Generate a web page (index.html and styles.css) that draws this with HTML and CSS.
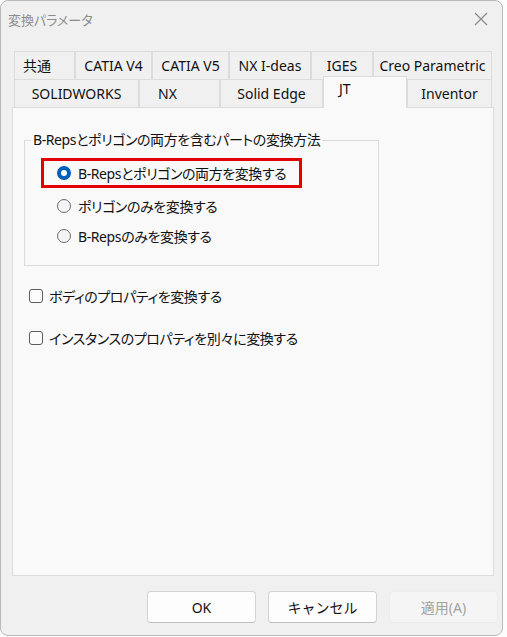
FILE: index.html
```html
<!DOCTYPE html>
<html lang="ja">
<head>
  <meta charset="UTF-8">
  <link rel="stylesheet" href="styles.css">
</head>
<body>

<div class="window">
  <div class="titlebar">
    <span class="title">変換パラメータ</span>
    <svg class="close" width="14" height="14" viewBox="0 0 14 14">
      <path d="M1 1 L13 13 M13 1 L1 13" stroke="#8a8a8a" stroke-width="1.2" fill="none"/>
    </svg>
  </div>

  <!-- タブ -->
  <div class="tabs">
    <div class="tab-row">
      <div class="tab left w-common">共通</div>
      <div class="tab w-v4">CATIA V4</div>
      <div class="tab w-v5">CATIA V5</div>
      <div class="tab w-ideas">NX I-deas</div>
      <div class="tab w-iges">IGES</div>
      <div class="tab w-creo">Creo Parametric</div>
    </div>
    <div class="tab-row">
      <div class="tab w-sw">SOLIDWORKS</div>
      <div class="tab left w-nx">NX</div>
      <div class="tab w-se">Solid Edge</div>
      <div class="tab left active w-jt">JT</div>
      <div class="tab w-inv">Inventor</div>
    </div>
  </div>

  <div class="panel">
    <fieldset class="group">
      <legend>B-Repsとポリゴンの両方を含むパートの変換方法</legend>
      <div class="opt mark"><span class="radio on"></span>B-Repsとポリゴンの両方を変換する</div>
      <div class="opt"><span class="radio"></span>ポリゴンのみを変換する</div>
      <div class="opt"><span class="radio"></span>B-Repsのみを変換する</div>
    </fieldset>

    <div class="check"><span class="box"></span>ボディのプロパティを変換する</div>
    <div class="check"><span class="box"></span>インスタンスのプロパティを別々に変換する</div>
  </div>

  <div class="buttons">
    <button class="btn">OK</button>
    <button class="btn">キャンセル</button>
    <button class="btn disabled">適用(A)</button>
  </div>
</div>

</body>
</html>
```
FILE: styles.css
```css
body {
  margin: 0;
  background: #fdfdfd;
  font-family: "Noto Sans", "Noto Sans CJK JP", sans-serif;
  font-feature-settings: "palt";
  color: #111;
}
.window {
  width: 501px;
  height: 634px;
  border: 1px solid #b9b9b9;
  border-radius: 8px;
  background: #f0f0f0;
  display: flex;
  flex-direction: column;
  overflow: hidden;
}
.titlebar {
  height: 36px;
  display: flex;
  align-items: center;
  justify-content: space-between;
  padding: 0 14px 0 7px;
}
.title {
  font-size: 13px;
  color: #8c8c8c;
}

/* タブ */
.tabs {
  margin: 14px 0 0 13px;
}
.tab-row {
  display: flex;
  align-items: flex-end;
  height: 28px;
}
.tab {
  box-sizing: border-box;
  height: 28px;
  border: 1px solid #dcdcdc;
  border-bottom: none;
  background: #f0f0f0;
  font-size: 14px;
  display: flex;
  align-items: center;
  justify-content: center;
  padding-bottom: 1px;
}
.tab.left { justify-content: flex-start; }
.tab.active {
  height: 32px;
  margin-bottom: -1px;
  background: #f9f9f9;
  padding-bottom: 8px;
  position: relative;
  z-index: 1;
}
.w-common { width: 61px; padding-left: 8px; }
.w-v4 { width: 77px; }
.w-v5 { width: 77px; }
.w-ideas { width: 82px; }
.w-iges { width: 62px; }
.w-creo { width: 119px; }
.w-sw { width: 125px; }
.w-nx { width: 81px; padding-left: 18px; }
.w-se { width: 103px; }
.w-jt { width: 84px; padding-left: 15px; }
.w-inv { width: 85px; }

.panel {
  margin-left: 11px;
  width: 480px;
  height: 467px;
  border: 1px solid #dcdcdc;
  background: #f9f9f9;
  font-size: 14px;
  letter-spacing: -0.4px;
}

.group {
  margin: 22px 0 0 11px;
  width: 355px;
  box-sizing: border-box;
  border: 1px solid #dcdcdc;
  padding: 8px 0 14px 0;
}
.group legend {
  margin-left: 6px;
  padding: 0 2px;
  line-height: 20px;
}
.opt {
  display: flex;
  align-items: center;
  gap: 7px;
  height: 30px;
  padding-left: 32px;
}
.opt.mark {
  box-sizing: border-box;
  width: 261px;
  margin: 0 0 3px 16px;
  padding-left: 13px;
  border: 3px solid #e30000;
}
.radio {
  width: 12px;
  height: 12px;
  border: 1px solid #6c6c6c;
  border-radius: 50%;
  background: #f4f4f4;
  flex-shrink: 0;
}
.radio.on {
  width: 6px;
  height: 6px;
  border: 4px solid #005fb8;
  background: #fff;
}

.check {
  display: flex;
  align-items: center;
  gap: 6px;
  height: 24px;
  margin-left: 16px;
}
.check:first-of-type { margin-top: 18px; }
.check + .check { margin-top: 18px; }
.box {
  width: 12px;
  height: 12px;
  border: 1px solid #5c5c5c;
  border-radius: 3px;
  background: #fbfbfb;
  flex-shrink: 0;
}

.buttons {
  display: flex;
  justify-content: flex-end;
  gap: 12px;
  padding: 15px 4px 0 0;
}
.btn {
  width: 109px;
  height: 32px;
  font-family: inherit;
  font-size: 14px;
  color: #111;
  background: #fdfdfd;
  border: 1px solid #d3d3d3;
  border-bottom-color: #bdbdbd;
  border-radius: 4px;
}
.btn.disabled {
  color: #a2a2a2;
  background: #f5f5f5;
  border-color: #ececec;
}
```
